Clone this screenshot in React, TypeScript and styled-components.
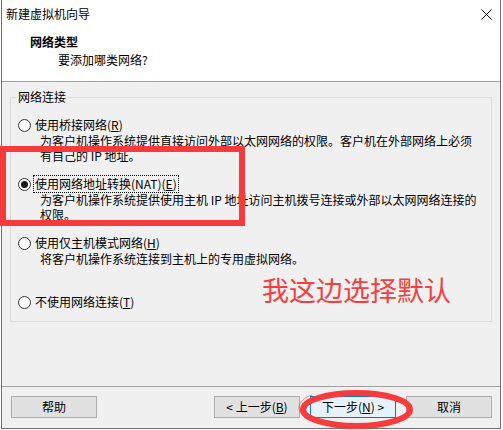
import React from "react";
import styled, { createGlobalStyle } from "styled-components";

const Global = createGlobalStyle`
  html, body { margin: 0; padding: 0; background: #ffffff; }
  body { font-family: "Noto Sans CJK SC", "Noto Sans", sans-serif; font-size: 12px; color: #000; }
  * { box-sizing: border-box; }
`;

const Page = styled.div`
  position: relative;
  width: 503px;
  height: 430px;
  padding-left: 1px;
`;

const Window = styled.div`
  width: 500px;
  height: 429px;
  border: 1px solid #707070;
  border-top: none;
  display: flex;
  flex-direction: column;
  background: #f0f0f0;
`;

const TitleBar = styled.div`
  height: 28px;
  background: #fff;
  display: flex;
  align-items: center;
  justify-content: space-between;
  padding: 0 8px 0 4px;
  font-size: 12px;
  line-height: 16px;
`;

const CloseIcon = () => (
  <svg width="11" height="11" viewBox="0 0 11 11" style={{ display: "block" }}>
    <path d="M0.5 0.5 L10.5 10.5 M10.5 0.5 L0.5 10.5" stroke="#000" strokeWidth="1" />
  </svg>
);

const Header = styled.div`
  height: 54px;
  background: #fff;
  border-bottom: 1px solid #a0a0a0;
  padding-top: 6px;
  display: flex;
  flex-direction: column;
`;

const HeaderTitle = styled.div`
  padding-left: 28px;
  font-weight: bold;
  line-height: 16px;
`;

const HeaderSub = styled.div`
  padding-left: 56px;
  margin-top: 2px;
  line-height: 16px;
`;

const Body = styled.div`
  height: 305px;
  padding: 7px 8px 0 8px;
  border-bottom: 1px solid #a0a0a0;
`;

const Group = styled.fieldset`
  margin: 0;
  border: 1px solid #dcdcdc;
  padding: 12px 7px 11px 7px;
  min-width: 0;
`;

const Legend = styled.legend`
  padding: 0 2px;
  margin-left: -2px;
  line-height: 16px;
  color: #000;
`;

const Option = styled.div<{ $h?: number }>`
  height: ${(p) => (p.$h ? `${p.$h}px` : "auto")};
  display: flex;
  flex-direction: column;
`;

const LabelRow = styled.div`
  display: flex;
  align-items: center;
  height: 16px;
  line-height: 16px;
`;

const Radio = styled.span<{ $checked?: boolean }>`
  width: 13px;
  height: 13px;
  border-radius: 50%;
  border: 1px solid #333;
  background: #fff;
  display: inline-flex;
  align-items: center;
  justify-content: center;
  flex: none;
  margin-right: 3px;
  &::after {
    content: "";
    width: 7px;
    height: 7px;
    border-radius: 50%;
    background: ${(p) => (p.$checked ? "#1a1a1a" : "transparent")};
  }
`;

const LabelText = styled.span<{ $focus?: boolean }>`
  padding: 0 1px;
  outline: ${(p) => (p.$focus ? "1px dotted #000" : "none")};
  outline-offset: 0;
  white-space: nowrap;
`;

const Desc = styled.div`
  margin-top: 1px;
  padding-left: 22px;
  line-height: 14px;
  white-space: nowrap;
`;

const Footer = styled.div`
  flex: 1;
  display: flex;
  align-items: flex-start;
  padding: 9px 8px 0 9px;
`;

const Spacer = styled.div`
  flex: 1;
`;

const Button = styled.button<{ $primary?: boolean; $gap?: number }>`
  width: 86px;
  height: 22px;
  margin-left: ${(p) => (p.$gap ? `${p.$gap}px` : "0")};
  font-family: "Noto Sans CJK SC", "Noto Sans", sans-serif;
  font-size: 12px;
  line-height: 16px;
  padding: 0;
  color: #000;
  background: ${(p) => (p.$primary ? "#e5f1fb" : "#e1e1e1")};
  border: 1px solid ${(p) => (p.$primary ? "#0078d7" : "#adadad")};
  border-radius: 0;
`;

const Annotation = styled.svg`
  position: absolute;
  left: 0;
  top: 0;
  pointer-events: none;
`;

const Note = styled.div`
  position: absolute;
  left: 262px;
  top: 276px;
  font-size: 27px;
  line-height: 27px;
  color: #f24040;
  white-space: nowrap;
  letter-spacing: 0;
`;

export default function App() {
  return (
    <>
      <Global />
      <Page>
        <Window>
          <TitleBar>
            <span>新建虚拟机向导</span>
            <CloseIcon />
          </TitleBar>
          <Header>
            <HeaderTitle>网络类型</HeaderTitle>
            <HeaderSub>要添加哪类网络?</HeaderSub>
          </Header>
          <Body>
            <Group>
              <Legend>网络连接</Legend>
              <Option $h={59}>
                <LabelRow>
                  <Radio />
                  <LabelText>
                    使用桥接网络(<u>R</u>)
                  </LabelText>
                </LabelRow>
                <Desc>为客户机操作系统提供直接访问外部以太网网络的权限。客户机在外部网络上必须</Desc>
                <Desc>有自己的 IP 地址。</Desc>
              </Option>
              <Option $h={59}>
                <LabelRow>
                  <Radio $checked />
                  <LabelText $focus>
                    使用网络地址转换(NAT)(<u>E</u>)
                  </LabelText>
                </LabelRow>
                <Desc>为客户机操作系统提供使用主机 IP 地址访问主机拨号连接或外部以太网网络连接的</Desc>
                <Desc>权限。</Desc>
              </Option>
              <Option $h={59}>
                <LabelRow>
                  <Radio />
                  <LabelText>
                    使用仅主机模式网络(<u>H</u>)
                  </LabelText>
                </LabelRow>
                <Desc>将客户机操作系统连接到主机上的专用虚拟网络。</Desc>
              </Option>
              <Option>
                <LabelRow>
                  <Radio />
                  <LabelText>
                    不使用网络连接(<u>T</u>)
                  </LabelText>
                </LabelRow>
              </Option>
            </Group>
          </Body>
          <Footer>
            <Button>帮助</Button>
            <Spacer />
            <Button>
              &lt; 上一步(<u>B</u>)
            </Button>
            <Button $primary $gap={10}>
              下一步(<u>N</u>) &gt;
            </Button>
            <Button $gap={10}>取消</Button>
          </Footer>
        </Window>
        <Annotation width="503" height="430" viewBox="0 0 503 430">
          <rect x="3" y="149" width="239" height="74" fill="none" stroke="#f53b3b" strokeWidth="6" />
          <ellipse cx="356.5" cy="409.5" rx="53.5" ry="16.5" fill="none" stroke="#f53b3b" strokeWidth="6" />
          <path d="M312 395 C 296 400, 294 413, 310 420" fill="none" stroke="#f53b3b" strokeWidth="1" opacity="0.6" />
        </Annotation>
        <Note>我这边选择默认</Note>
      </Page>
    </>
  );
}
